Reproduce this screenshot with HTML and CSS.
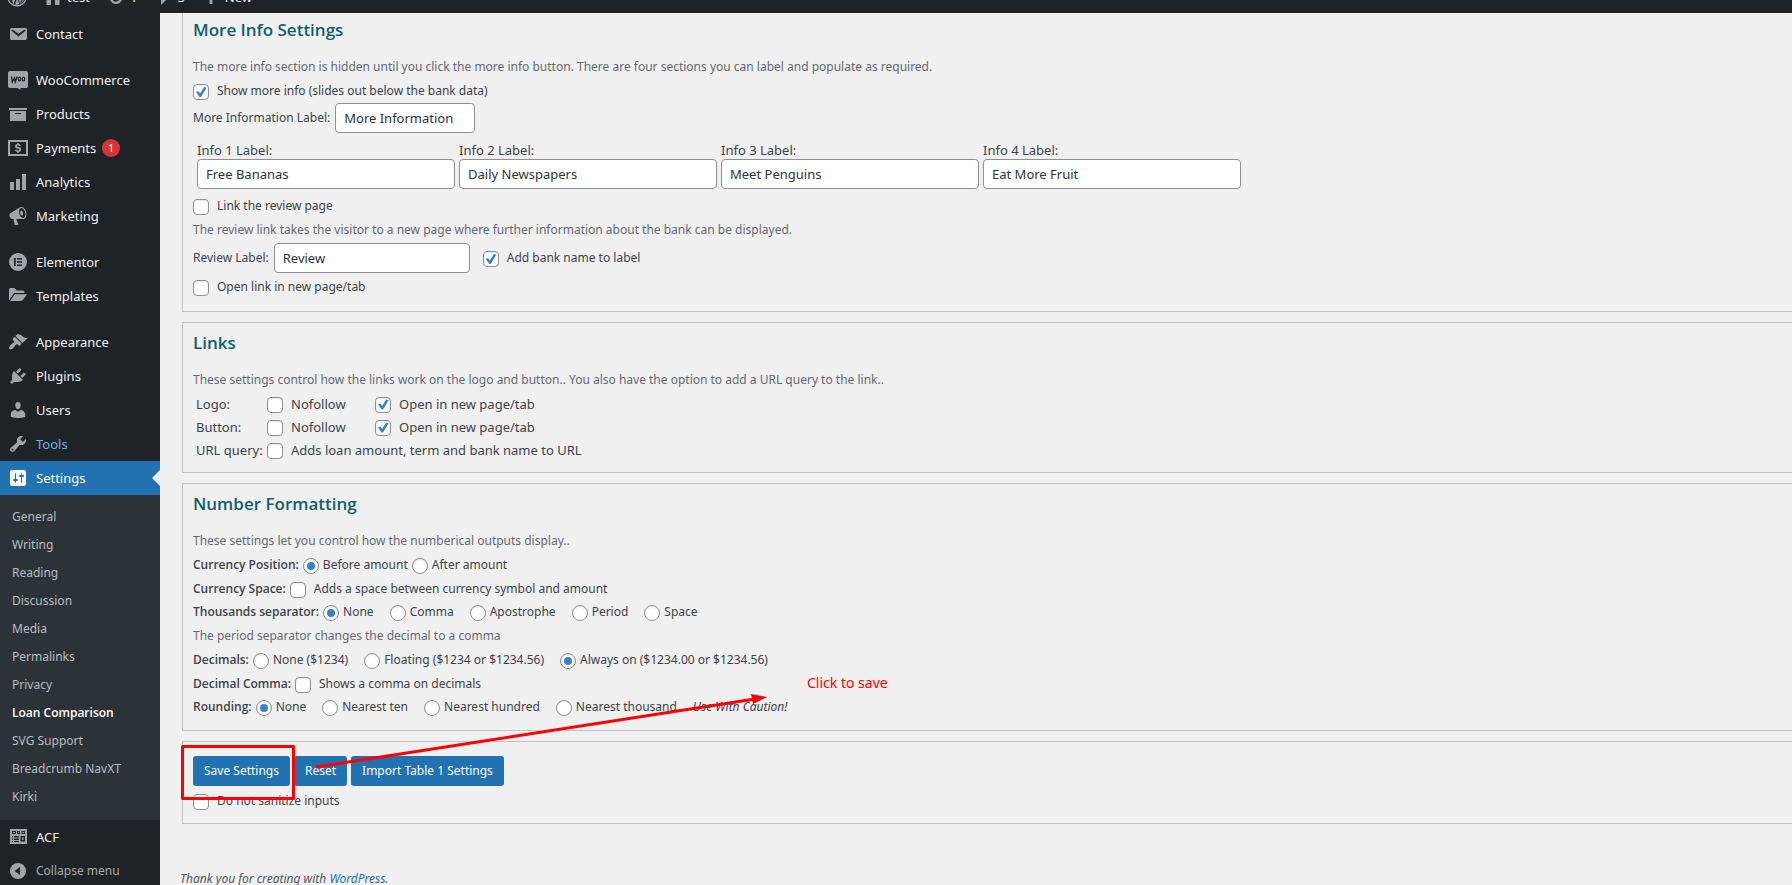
FILE: index.html
```html
<!DOCTYPE html>
<html lang="en">
<head>
<meta charset="utf-8">
<title>Loan Comparison Settings</title>
<link rel="stylesheet" href="styles.css">
</head>
<body>
<div class="page">
  <header class="adminbar">
    <a class="bar-item bar-logo" href="#" aria-label="About WordPress"><svg class="icon" viewBox="0 0 20 20"><circle cx="10" cy="10" r="9" fill="none" stroke="currentColor" stroke-width="1.4"/><path d="M2.600 7.200 6.600 17.200 8.700 11.200 7.200 7.300 6.200 7V6.300h4.800V7l-1.200.3 3.300 9.500 1.500-5c.5-1.600-.9-3-.9-4.300 0-1 .8-1.900 1.800-1.900A7.300 7.300 0 0 0 4 5.900zM10.200 11.500 8 17.500c1.500.3 3 .2 4.400-.2zM16.800 7.100c.2 1.600-.1 2.700-.5 3.900L14 16.200a7.300 7.300 0 0 0 2.800-9.100z"/></svg></a>
    <a class="bar-item" href="#"><svg class="icon" viewBox="0 0 20 20"><path d="M16 8.500l1.500 1.500-1 1L10 4.600l-6.500 6.300-1-1L10 2.500l3 3V4h2v3.500zm-6-2.500l6.500 5.500V18H12v-5H8v5H3.500v-6.500z"/></svg><span>test</span></a>
    <a class="bar-item" href="#"><svg class="icon" viewBox="0 0 20 20"><path d="M10.200 3.300c2.800 0 5 1.800 5.800 4.200h2l-3.200 3.800L11.500 7.500h2a4 4 0 0 0-7.200 1L4 7.500a6.500 6.500 0 0 1 6.200-4.200zM9.800 17c-2.800 0-5-1.800-5.800-4.200H2L5.200 9l3.300 3.800h-2a4 4 0 0 0 7.200-1l2.300 1A6.500 6.500 0 0 1 9.800 17z"/></svg><span>1</span></a>
    <a class="bar-item" href="#"><svg class="icon" viewBox="0 0 20 20"><path d="M5 2h10a2 2 0 0 1 2 2v7a2 2 0 0 1-2 2h-2l-5 5v-5H5a2 2 0 0 1-2-2V4a2 2 0 0 1 2-2z"/></svg><span>3</span></a>
    <a class="bar-item" href="#"><svg class="icon" viewBox="0 0 20 20"><path d="M8.500 3h3v5.500H17v3h-5.500V17h-3v-5.500H3v-3h5.500z"/></svg><span>New</span></a>
  </header>
  <div class="body">
    <nav class="menu" aria-label="Main menu">
      <ul class="menu-group">
        <li><a class="menu-item" href="#"><svg class="icon" viewBox="0 0 20 20"><path d="M3.870 4h13.250C18.370 4 19 4.590 19 5.790v8.420c0 1.190-.63 1.790-1.880 1.790H3.870c-1.250 0-1.880-.6-1.880-1.790V5.790c0-1.200.63-1.790 1.880-1.790zm6.620 8.600l6.740-5.530c.24-.2.43-.66.13-1.070-.29-.41-.82-.42-1.170-.17l-5.700 3.860L4.800 5.830c-.35-.25-.88-.24-1.170.17-.3.41-.11.87.13 1.070z"/></svg>Contact</a></li>
      </ul>
      <ul class="menu-group">
        <li><a class="menu-item" href="#"><svg class="icon" viewBox="0 0 20 20"><path d="M2 1h16a2 2 0 0 1 2 2v13a2 2 0 0 1-2 2h-5.500v2L9.500 18H2a2 2 0 0 1-2-2V3a2 2 0 0 1 2-2z"/><path class="cut" d="M3.500 6.500l.8 5.500 2.200-4 .7 4 2-5.500"/><ellipse class="cut" cx="11.500" cy="9" rx="1.200" ry="1.900"/><ellipse class="cut" cx="15.500" cy="9" rx="1.200" ry="1.900"/></svg>WooCommerce</a></li>
        <li><a class="menu-item" href="#"><svg class="icon" viewBox="0 0 20 20"><path d="M19 4v2H1V4h18zM2 7h16v10H2V7zm11 3V9H7v1h6z"/></svg>Products</a></li>
        <li><a class="menu-item" href="#"><svg class="icon" viewBox="0 0 20 20"><rect x="1" y="3" width="18" height="14" fill="none" stroke="currentColor" stroke-width="2"/><path d="M9.200 5h1.600v1.100c1.100.2 1.900.8 2.100 1.800h-1.800c-.2-.4-.6-.6-1.100-.6-.7 0-1.100.3-1.100.7 0 1.300 4.200.5 4.200 3.400 0 1.300-.9 2.200-2.300 2.500V15H9.200v-1.100c-1.300-.2-2.200-1-2.300-2.200h1.800c.1.600.6.900 1.400.9.700 0 1.200-.3 1.200-.8 0-1.400-4.200-.5-4.200-3.500 0-1.100.8-1.900 2.100-2.200z"/></svg>Payments<span class="badge">1</span></a></li>
        <li><a class="menu-item" href="#"><svg class="icon" viewBox="0 0 20 20"><path d="M18 18V2h-4v16h4zm-6 0V7H8v11h4zm-6 0v-8H2v8h4z"/></svg>Analytics</a></li>
        <li><a class="menu-item" href="#"><svg class="icon" viewBox="0 0 20 20"><path d="M18.150 5.940c.46 1.620.38 3.220-.02 4.480-.42 1.280-1.260 2.180-2.300 2.480-.16.06-.26.06-.4.06-.06.02-.12.02-.18.02-.06.02-.14.02-.22.02h-6.800l2.220 5.500c.02.14-.06.26-.14.34-.08.1-.24.16-.34.16H6.950c-.1 0-.26-.06-.34-.16-.08-.08-.16-.2-.14-.34l-1-5.500H4.250l-.02-.02c-.5.06-1.080-.18-1.540-.62s-.88-1.080-1.060-1.880c-.24-.8-.2-1.560-.02-2.200.18-.62.58-1.080 1.060-1.300l.02-.02 9-5.400c.1-.06.18-.1.24-.16.06-.04.14-.08.24-.12.16-.08.28-.12.5-.18 1.040-.3 2.240.1 3.220.98s1.840 2.240 2.260 3.860zm-2.580 5.980h-.02c.4-.1.74-.34 1.040-.7.58-.7.86-1.760.86-3.040 0-.64-.1-1.300-.28-1.980-.34-1.360-1.020-2.500-1.780-3.240s-1.680-1.100-2.460-.88c-.82.22-1.400.96-1.700 2-.32 1.040-.28 2.360.06 3.720.38 1.360 1 2.500 1.800 3.240.78.74 1.620 1.100 2.480.88zm-2.540-7.080c.22-.04.42-.02.62.04.38.16.76.48 1.020 1s.42 1.200.42 1.780c0 .3-.04.56-.12.8-.18.48-.44.84-.86.94-.34.1-.8-.06-1.140-.4s-.64-.86-.78-1.500c-.18-.62-.12-1.240.02-1.720s.48-.84.82-.94z"/></svg>Marketing</a></li>
      </ul>
      <ul class="menu-group">
        <li><a class="menu-item" href="#"><svg class="icon" viewBox="0 0 20 20"><path fill-rule="evenodd" d="M10 1a9 9 0 1 0 0 18 9 9 0 0 0 0-18zM6 6h1.700v8H6zM9 6h5v1.600H9zM9 9.200h5v1.600H9zM9 12.400h5V14H9z"/></svg>Elementor</a></li>
        <li><a class="menu-item" href="#"><svg class="icon" viewBox="0 0 20 20"><path d="M1 3.500C1 2.700 1.500 2 2.300 2H6.500l2 2.500H15c.8 0 1.300.6 1.300 1.300V7H7.500c-1 0-1.800.4-2.300 1.200L1 14.500zM7.800 8.300H19L14.800 14c-.5.700-1.100 1-2 1H2.200l4-5.900c.4-.5.900-.8 1.600-.8z"/></svg>Templates</a></li>
      </ul>
      <ul class="menu-group">
        <li><a class="menu-item" href="#"><svg class="icon" viewBox="0 0 20 20"><path d="M14.480 11.060L7.410 3.990l1.500-1.500c.5-.56 2.300-.47 3.510.32 1.210.8 1.430 1.280 2.910 2.100 1.180.64 2.450 1.260 4.450.85zm-.71.71L6.700 4.700 4.930 6.470c-.39.39-.39 1.020 0 1.410l1.060 1.060c.39.39.39 1.030 0 1.420-.6.6-1.430 1.110-2.210 1.690-.35.26-.7.53-1.010.84C1.430 14.230.4 16.080 1.400 17.070c.99 1 2.840-.03 4.180-1.360.31-.31.58-.66.85-1.020.57-.78 1.080-1.610 1.690-2.210.39-.39 1.020-.39 1.410 0l1.060 1.060c.39.39 1.020.39 1.410 0z"/></svg>Appearance</a></li>
        <li><a class="menu-item" href="#"><svg class="icon" viewBox="0 0 20 20"><path d="M13.110 4.360L9.870 7.600 8 5.730l3.240-3.240c.35-.34 1.050-.2 1.560.32.52.51.66 1.210.31 1.550zm-8 1.770l.91-1.120 9.010 9.010-1.190.84c-.71.71-2.630 1.160-3.820 1.160H6.140L4.900 17.260c-.59.59-1.540.59-2.120 0-.59-.58-.59-1.530 0-2.120l1.240-1.240v-3.880c0-1.130.4-3.190 1.090-3.890zm7.260 3.970l3.240-3.240c.34-.35 1.040-.21 1.550.31.52.51.66 1.210.31 1.550l-3.240 3.250z"/></svg>Plugins</a></li>
        <li><a class="menu-item" href="#"><svg class="icon" viewBox="0 0 20 20"><path d="M10 9.250c-2.270 0-2.730-3.440-2.730-3.440C7 4.020 7.820 2 9.970 2c2.160 0 2.980 2.020 2.710 3.810 0 0-.41 3.440-2.680 3.440zm0 2.570L12.720 10c2.390 0 4.520 2.330 4.520 4.530v2.490s-3.650 1.130-7.240 1.130c-3.650 0-7.240-1.130-7.240-1.130v-2.490c0-2.250 1.940-4.480 4.470-4.480z"/></svg>Users</a></li>
        <li><a class="menu-item menu-item-hover" href="#"><svg class="icon" viewBox="0 0 20 20"><path d="M16.680 9.770c-1.340 1.340-3.300 1.670-4.950.99l-5.410 6.520c-.99.99-2.590.99-3.580 0s-.99-2.590 0-3.570l6.520-5.420c-.68-1.650-.35-3.610.99-4.950 1.280-1.280 3.120-1.620 4.720-1.060l-2.890 2.890 2.820 2.820 2.860-2.870c.53 1.580.18 3.390-1.080 4.650zM3.810 16.210c.4.39 1.040.39 1.430 0 .4-.4.4-1.040 0-1.430-.39-.4-1.030-.4-1.430 0-.39.39-.39 1.030 0 1.430z"/></svg>Tools</a></li>
        <li><a class="menu-item menu-item-current" href="#"><svg class="icon" viewBox="0 0 20 20"><path d="M18 16V4c0-1.100-.9-2-2-2H4c-1.100 0-2 .9-2 2v12c0 1.100.9 2 2 2h12c1.100 0 2-.9 2-2zM8 11h1c.55 0 1 .45 1 1s-.45 1-1 1H8v1.500c0 .28-.22.5-.5.5s-.5-.22-.5-.5V13H6c-.55 0-1-.45-1-1s.45-1 1-1h1V5.500c0-.28.22-.5.5-.5s.5.22.5.5V11zm5-2h-1c-.55 0-1-.45-1-1s.45-1 1-1h1V5.500c0-.28.22-.5.5-.5s.5.22.5.5V7h1c.55 0 1 .45 1 1s-.45 1-1 1h-1v5.500c0 .28-.22.5-.5.5s-.5-.22-.5-.5V9z"/></svg>Settings</a>
          <ul class="submenu">
            <li><a class="submenu-item" href="#">General</a></li>
            <li><a class="submenu-item" href="#">Writing</a></li>
            <li><a class="submenu-item" href="#">Reading</a></li>
            <li><a class="submenu-item" href="#">Discussion</a></li>
            <li><a class="submenu-item" href="#">Media</a></li>
            <li><a class="submenu-item" href="#">Permalinks</a></li>
            <li><a class="submenu-item" href="#">Privacy</a></li>
            <li><a class="submenu-item submenu-current" href="#" aria-current="page">Loan Comparison</a></li>
            <li><a class="submenu-item" href="#">SVG Support</a></li>
            <li><a class="submenu-item" href="#">Breadcrumb NavXT</a></li>
            <li><a class="submenu-item" href="#">Kirki</a></li>
          </ul>
        </li>
        <li><a class="menu-item" href="#"><svg class="icon" viewBox="0 0 20 20"><path fill-rule="evenodd" d="M2 2h17v15H2zM4 4v3h4V4zM9 4v3h3V4zM13.500 4v3h3.500V4zM5 5h2v1H5zM10 5h1v1h-1zM14.500 5H16v1h-1.500zM4 9v1.500h1V9zM6 9v1.500h5V9zM12.500 9v5.500H17V9zM14 10.500h1.500V13H14zM4 11.500V13h1v-1.500zM6 11.500V13h5v-1.500zM4 14v1h1v-1zM6 14v1h5v-1z"/></svg>ACF</a></li>
        <li><button class="menu-item menu-collapse" type="button"><svg class="icon" viewBox="0 0 20 20"><path fill-rule="evenodd" d="M10 2a8 8 0 1 0 0 16 8 8 0 0 0 0-16zM6.500 10l5.500-4v8z"/></svg>Collapse menu</button></li>
      </ul>
    </nav>
    <main class="content">
      <form class="settings">
        <section class="panel panel-first">
          <h2 class="panel-title">More Info Settings</h2>
          <p class="note note-lead">The more info section is hidden until you click the more info button. There are four sections you can label and populate as required.</p>
          <div class="row"><label class="choice"><input class="check" type="checkbox" checked>Show more info (slides out below the bank data)</label></div>
          <div class="row row-field"><label for="more">More Information Label:</label><input class="field field-short" id="more" type="text" value="More Information"></div>
          <div class="info-grid">
            <label class="info">Info 1 Label:<input class="field" type="text" value="Free Bananas"></label>
            <label class="info">Info 2 Label:<input class="field" type="text" value="Daily Newspapers"></label>
            <label class="info">Info 3 Label:<input class="field" type="text" value="Meet Penguins"></label>
            <label class="info">Info 4 Label:<input class="field" type="text" value="Eat More Fruit"></label>
          </div>
          <div class="row"><label class="choice"><input class="check" type="checkbox">Link the review page</label></div>
          <p class="row row-tight note">The review link takes the visitor to a new page where further information about the bank can be displayed.</p>
          <div class="row row-field row-spaced"><label for="review">Review Label:</label><input class="field field-medium" id="review" type="text" value="Review"><label class="choice choice-after"><input class="check" type="checkbox" checked>Add bank name to label</label></div>
          <div class="row"><label class="choice"><input class="check" type="checkbox">Open link in new page/tab</label></div>
        </section>

        <section class="panel">
          <h2 class="panel-title">Links</h2>
          <p class="note note-lead">These settings control how the links work on the logo and button.. You also have the option to add a URL query to the link..</p>
          <div class="link-grid">
            <span>Logo:</span><label class="choice"><input class="check" type="checkbox">Nofollow</label><label class="choice"><input class="check" type="checkbox" checked>Open in new page/tab</label>
            <span>Button:</span><label class="choice"><input class="check" type="checkbox">Nofollow</label><label class="choice"><input class="check" type="checkbox" checked>Open in new page/tab</label>
            <span>URL query:</span><label class="choice choice-wide"><input class="check" type="checkbox">Adds loan amount, term and bank name to URL</label>
          </div>
        </section>

        <section class="panel">
          <h2 class="panel-title">Number Formatting</h2>
          <p class="note note-lead">These settings let you control how the numberical outputs display..</p>
          <div class="row row-pair"><b>Currency Position:</b><label class="option"><input class="radio" type="radio" name="position" checked>Before amount</label><label class="option"><input class="radio" type="radio" name="position">After amount</label></div>
          <div class="row row-tight"><b>Currency Space:</b><label class="choice"><input class="check" type="checkbox">Adds a space between currency symbol and amount</label></div>
          <div class="row"><b>Thousands separator:</b><div class="options"><label class="option"><input class="radio" type="radio" name="thousands" checked>None</label><label class="option"><input class="radio" type="radio" name="thousands">Comma</label><label class="option"><input class="radio" type="radio" name="thousands">Apostrophe</label><label class="option"><input class="radio" type="radio" name="thousands">Period</label><label class="option"><input class="radio" type="radio" name="thousands">Space</label></div></div>
          <p class="row note">The period separator changes the decimal to a comma</p>
          <div class="row"><b>Decimals:</b><div class="options"><label class="option"><input class="radio" type="radio" name="decimals">None ($1234)</label><label class="option"><input class="radio" type="radio" name="decimals">Floating ($1234 or $1234.56)</label><label class="option"><input class="radio" type="radio" name="decimals" checked>Always on ($1234.00 or $1234.56)</label></div></div>
          <div class="row row-tight"><b>Decimal Comma:</b><label class="choice"><input class="check" type="checkbox">Shows a comma on decimals</label></div>
          <div class="row"><b>Rounding:</b><div class="options"><label class="option"><input class="radio" type="radio" name="rounding" checked>None</label><label class="option"><input class="radio" type="radio" name="rounding">Nearest ten</label><label class="option"><input class="radio" type="radio" name="rounding">Nearest hundred</label><label class="option"><input class="radio" type="radio" name="rounding">Nearest thousand</label><em>Use With Caution!</em></div></div>
        </section>

        <section class="panel panel-save">
          <div class="buttons"><button class="button" type="button">Save Settings</button><button class="button" type="button">Reset</button><button class="button" type="button">Import Table 1 Settings</button></div>
          <div class="row"><label class="choice"><input class="check" type="checkbox">Do not sanitize inputs</label></div>
          <svg class="callout" viewBox="0 0 740 140">
            <rect class="callout-line" x="11.500" y="84.500" width="111" height="52"/>
            <path class="callout-line" d="M145 105 584 37"/>
            <path class="callout-fill" d="M580 32 596 35 582 42z"/>
            <text class="callout-text" x="636" y="26">Click to save</text>
          </svg>
        </section>
      </form>
      <footer class="footer">Thank you for creating with <a href="#">WordPress</a>.</footer>
    </main>
  </div>
</div>
</body>
</html>
```
FILE: styles.css
```css
* { box-sizing: border-box; }
body { margin: 0; background: #f0f0f0; color: #3c434a; font: 12px/18px "Noto Sans", "Open Sans", sans-serif; }
h2, p, ul { margin: 0; padding: 0; }
ul { list-style: none; }
a { text-decoration: none; }
b { font-family: "Open Sans", "Noto Sans", sans-serif; font-weight: 600; }
.page { height: 100vh; overflow: hidden; display: flex; flex-direction: column; }
.icon { width: 20px; height: 20px; flex: none; fill: currentColor; color: #a0a5aa; }

/* The toolbar is scrolled part of the way out of view. */
.adminbar { height: 13px; flex: none; overflow: hidden; display: flex; align-items: flex-end; background: #1d2327; }
.bar-item { height: 32px; flex: none; display: flex; align-items: center; gap: 4px; margin-right: 16px; color: #f0f0f1; font-size: 13px; }
.bar-logo { padding-left: 7px; }

.body { flex: 1; min-height: 0; display: flex; }
.menu { width: 160px; flex: none; padding-top: 4px; background: #1d2327; font-size: 13px; }
.menu-group + .menu-group { margin-top: 12px; }
.menu-item { width: 100%; height: 34px; padding: 0 8px; display: flex; align-items: center; gap: 8px; border: 0; background: none; color: #f0f0f1; font: inherit; }
.menu-item-hover { color: #72aee6; }
.menu-item-current { position: relative; background: #2271b1; color: #fff; }
.menu-item-current .icon { color: #fff; }
.menu-item-current::after { content: ""; position: absolute; right: 0; top: 9px; border: 8px solid transparent; border-left: 0; border-right-color: #f0f0f0; }
.menu-collapse { color: #a7aaad; font-size: 12px; }
.cut { fill: none; stroke: #1d2327; stroke-width: 1.3; }
.badge { width: 18px; height: 18px; margin-left: -2px; border-radius: 9px; background: #d63638; color: #fff; font-size: 11px; text-align: center; }
.submenu { padding: 8px 0 9px; background: #2c3338; }
.submenu-item { height: 28px; padding-left: 12px; display: flex; align-items: center; color: #b9bdc1; font-size: 12px; }
.submenu-current { color: #fff; font-family: "Open Sans", "Noto Sans", sans-serif; font-weight: 600; }

.content { flex: 1; min-width: 0; margin-right: -20px; padding-left: 22px; }
.settings { display: flex; flex-direction: column; gap: 10px; }
.panel { padding: 8px 10px 11px; border: 1px solid #c3c4c7; }
.panel-first { padding-top: 5px; padding-bottom: 12px; border-top: 0; }
.panel-title { margin-bottom: 13px; color: #0f5f6b; font-family: "Open Sans", "Noto Sans", sans-serif; font-size: 17px; font-weight: 600; line-height: 24px; }
.note { color: #646970; }
.note-lead { padding: 3px 0; }
.row { min-height: 24px; display: flex; align-items: center; gap: 4px; }
.row-tight { min-height: 23px; }
.row-field { gap: 5px; }
.row-spaced { min-height: 34px; }
.choice, .option { display: flex; align-items: center; }
.choice { gap: 8px; }
.choice-after { margin-left: 8px; }
.option { gap: 4px; }
.options { display: flex; gap: 16px; }
.check, .radio { appearance: none; width: 16px; height: 16px; margin: 2px 0 0; flex: none; border: 1px solid #8c8f94; background: #fff; box-shadow: inset 0 1px 2px rgba(0, 0, 0, .1); }
.check { border-radius: 4px; }
.check, .radio { display: grid; place-items: center; }
.radio { border-radius: 50%; }
.radio:checked::before { content: ""; width: 8px; height: 8px; border-radius: 50%; background: #3582c4; }
.check:checked::before { content: ""; width: 12px; height: 12px; background: #3582c4; clip-path: polygon(8% 48%, 28% 44%, 42% 62%, 76% 8%, 96% 14%, 50% 92%, 38% 92%); }
.field { height: 30px; padding: 0 8px; border: 1px solid #8c8f94; border-radius: 4px; background: #fff; color: #2c3338; font: inherit; font-size: 13px; }
.field-short { width: 140px; }
.field-medium { width: 196px; }
.info-grid { width: 1052px; max-width: 100%; padding: 8px 4px 5px; display: grid; grid-template-columns: repeat(4, 1fr); gap: 4px; font-size: 13px; }
.info { display: flex; flex-direction: column; }
.link-grid { padding: 0 3px; display: grid; grid-template-columns: 71px 108px auto; grid-auto-rows: 23px; align-items: center; justify-content: start; font-size: 13px; }
.choice-wide { grid-column: span 2; }

.panel-save { position: relative; padding-top: 14px; padding-bottom: 10px; }
.buttons { display: flex; gap: 4px; margin-bottom: 3px; }
.button { height: 30px; padding: 0 11px; border: 0; border-radius: 3px; background: #2271b1; color: #fff; font: inherit; }
.callout { position: absolute; left: -12px; top: -80px; width: 740px; height: 140px; pointer-events: none; }
.callout-line { fill: none; stroke: #f00; stroke-width: 3; stroke-linejoin: round; }
.callout-fill { fill: #f00; }
.callout-text { fill: #f00; font-size: 14px; }
.footer { margin: 46px 0 0 -2px; color: #50575e; font-style: italic; }
.footer a { color: #2271b1; }
```
